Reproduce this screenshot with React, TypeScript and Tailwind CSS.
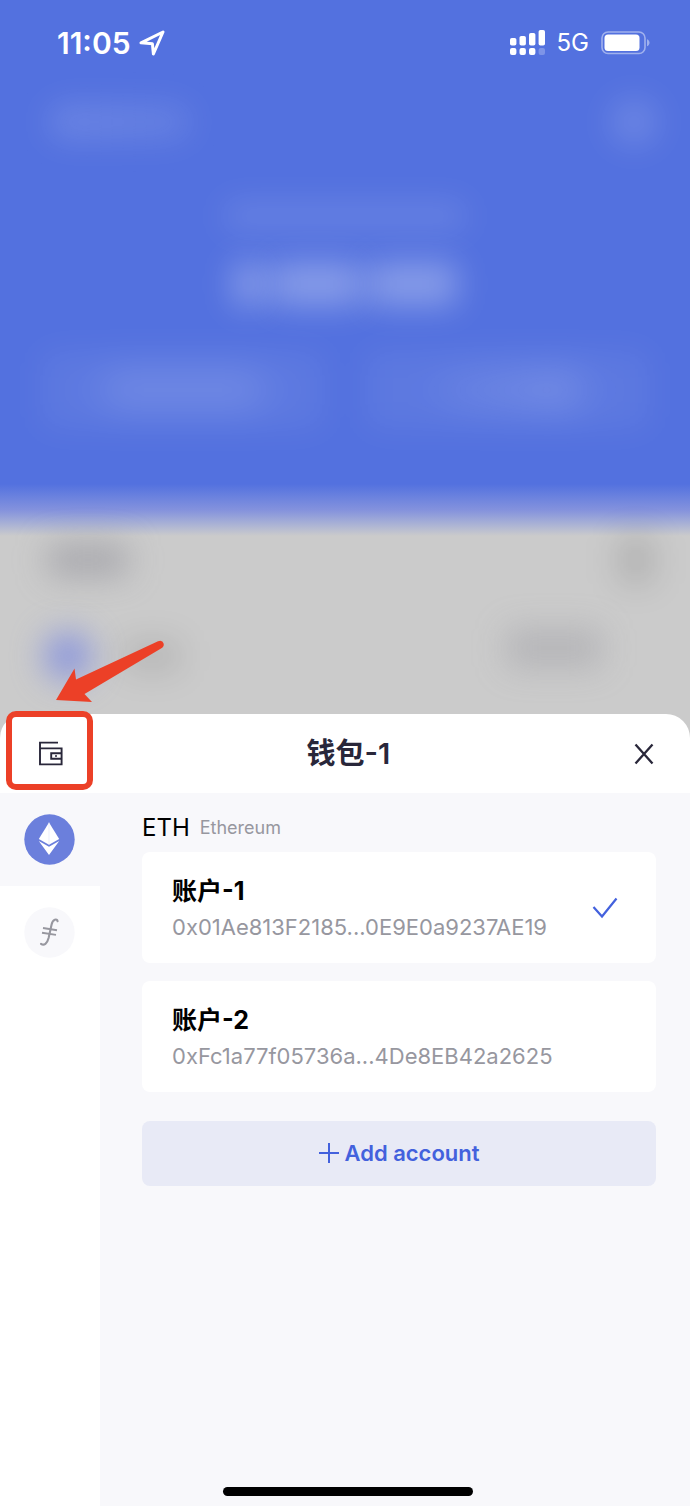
import React from "react";

const FONT = "font-['Inter','Noto_Sans_CJK_SC',sans-serif]";

function StatusBar() {
  return (
    <header className="flex h-[86px] items-center justify-between pl-[57px] pr-10 text-white">
      <div className="flex items-center gap-2">
        <time className="text-[30px] font-semibold leading-9">11:05</time>
        <svg width="26" height="26" viewBox="0 0 26 26" fill="none" aria-hidden="true">
          <path d="M2 12.8 L24 2 L14.4 24 L13.4 13.8 Z" stroke="white" strokeWidth="3" strokeLinejoin="round" />
        </svg>
      </div>
      <div className="flex items-center gap-3">
        <svg width="35" height="26" viewBox="0 0 35 26" fill="white" aria-hidden="true">
          <rect x="0" y="8" width="6.4" height="7.5" rx="1.8" />
          <rect x="9.5" y="6" width="6.4" height="9.5" rx="1.8" />
          <rect x="19" y="3" width="6.4" height="12.5" rx="1.8" />
          <rect x="28.6" y="0" width="6.4" height="15.5" rx="1.8" />
          <rect x="0" y="18" width="6.4" height="7" rx="2" />
          <rect x="9.5" y="18" width="6.4" height="7" rx="2" />
          <rect x="19" y="18" width="6.4" height="7" rx="2" />
          <rect x="28.6" y="18" width="6.4" height="7" rx="2" opacity="0.25" />
        </svg>
        <span className="text-2xl leading-8">5G</span>
        <svg width="49" height="24" viewBox="0 0 49 24" aria-hidden="true">
          <rect x="1" y="1" width="43" height="21.5" rx="6" fill="none" stroke="white" strokeOpacity="0.45" strokeWidth="1.6" />
          <rect x="3.5" y="3.5" width="35" height="16.5" rx="3.5" fill="white" />
          <path d="M46 8.2 C49.4 9.5 49.4 14 46 15.3 Z" fill="white" opacity="0.45" />
        </svg>
      </div>
    </header>
  );
}

function BlurredDashboard() {
  return (
    <div aria-hidden="true">
      <div className="flex items-center justify-between pl-12 pr-8 pt-3">
        <div className="h-9 w-36 rounded-full bg-linear-to-r from-white/15 to-white/10 blur-lg" />
        <div className="size-12 rounded-full bg-white/15 blur-lg" />
      </div>
      <div className="flex flex-col items-center gap-8 pt-14">
        <div className="h-7 w-60 rounded-md bg-white/12 blur-lg" />
        <div className="flex gap-2">
          <div className="h-11 w-8 rounded-md bg-white/30 blur-lg" />
          <div className="h-11 w-22 rounded-md bg-white/30 blur-lg" />
          <div className="h-11 w-22 rounded-md bg-white/30 blur-lg" />
        </div>
      </div>
      <div className="grid grid-cols-2 gap-10 px-10 pt-11">
        <div className="flex h-20 items-center justify-center rounded-xl bg-white/6 blur-lg">
          <div className="h-8 w-40 rounded-md bg-white/15 blur-md" />
        </div>
        <div className="flex h-20 items-center justify-center rounded-xl bg-white/6 blur-lg">
          <div className="h-8 w-36 rounded-md bg-linear-to-r from-white/5 to-white/20 blur-md" />
        </div>
      </div>
    </div>
  );
}

function BlurredAssets() {
  return (
    <div aria-hidden="true" className="h-[178px] bg-[#cbcbcb]">
      <div className="flex items-center justify-between pl-12 pr-9">
        <div className="h-8 w-20 rounded-md bg-[#85868f]/50 blur-lg" />
        <div className="h-12 w-9 rounded-md bg-black/12 blur-lg" />
      </div>
      <div className="flex items-center pl-11 pr-[88px] pt-11">
        <div className="size-12 rounded-full bg-[#7c8ae0]/80 blur-lg" />
        <div className="ml-8 h-8 w-14 rounded-md bg-black/10 blur-lg" />
        <div className="mb-4 ml-auto h-10 w-24 rounded-md bg-[#85868f]/30 blur-lg" />
      </div>
    </div>
  );
}

function WalletIcon() {
  return (
    <svg width="25" height="25" viewBox="0 0 25 25" fill="none" stroke="#29273a" strokeWidth="1.9" aria-hidden="true">
      <path d="M20 1.6 H2 V23.4 H23.6 V7.4 H2" />
      <path d="M23.6 12.3 H13.2 V17.7 H23.6" />
      <circle cx="18" cy="15" r="1" fill="#29273a" stroke="none" />
    </svg>
  );
}

function EthIcon() {
  return (
    <svg width="51" height="51" viewBox="0 0 51 51" aria-hidden="true">
      <circle cx="25.5" cy="25.5" r="25.2" fill="#6b7fdc" />
      <path d="M25 8.5 L35.2 25 L25 30.8 L14.8 25 Z" fill="white" />
      <path d="M14.8 27 L25 32.8 L35.2 27 L25 41 Z" fill="white" />
      <path d="M25 8.5 V30.5" stroke="#e3e7f9" strokeWidth="0.7" />
    </svg>
  );
}

function FilIcon() {
  return (
    <svg width="51" height="51" viewBox="0 0 51 51" fill="none" stroke="#97979f" aria-hidden="true">
      <circle cx="25.5" cy="25.5" r="25.2" fill="#f8f8fb" stroke="none" />
      <path d="M33.6 14.2 C33 11.4 28.8 12 27.6 17.5 L24.6 31 C23.2 36.6 20 39 17 36.8" strokeWidth="2.1" strokeLinecap="round" />
      <path d="M19 21 L33 23.2 M18 25.7 L32 27.9" strokeWidth="1.9" />
    </svg>
  );
}

const accounts = [
  { name: "账户-1", address: "0x01Ae813F2185...0E9E0a9237AE19", selected: true },
  { name: "账户-2", address: "0xFc1a77f05736a...4De8EB42a2625", selected: false },
];

function AccountCard({ name, address, selected }: (typeof accounts)[number]) {
  return (
    <button
      type="button"
      aria-pressed={selected}
      className="flex h-[111px] w-full items-center justify-between rounded-lg bg-white pl-[30px] pr-[38px] text-left"
    >
      <span className="flex flex-col gap-0.5">
        <span className="text-[25px] font-bold leading-9 text-black">{name}</span>
        <span className="text-[22px] leading-8 text-[#97979f]">{address}</span>
      </span>
      {selected && (
        <svg width="26" height="22" viewBox="0 0 26 22" fill="none" aria-hidden="true">
          <path d="M1.5 10 L10 19.5 L24.5 1.5" stroke="#4361dd" strokeWidth="2.2" />
        </svg>
      )}
    </button>
  );
}

function Sheet() {
  return (
    <section className="relative flex flex-1 flex-col rounded-t-3xl bg-white">
      <div className="flex h-[79px] items-center justify-between pl-[38px] pr-9">
        <button type="button" aria-label="Wallets" className="relative">
          <WalletIcon />
          <span className="pointer-events-none absolute -bottom-6 -left-8 -right-[30px] -top-[30px] rounded-[10px] border-[6px] border-[#ec4027]" />
          <svg
            className="pointer-events-none absolute -top-[102px] left-4"
            width="112"
            height="66"
            viewBox="0 0 112 66"
            fill="#ec4027"
            aria-hidden="true"
          >
            <path d="M2 61 L20.5 29.5 L22 40.5 L104 2.3 Q108.5 0.8 109.6 4.5 Q110.5 7.5 107 9.5 L30.500 55 L38 63 Z" />
          </svg>
        </button>
        <h1 className="text-[29px] font-semibold leading-10 text-[#29273a]">钱包-1</h1>
        <button type="button" aria-label="Close">
          <svg width="20" height="22" viewBox="0 0 20 22" fill="none" stroke="#29273a" strokeWidth="2.3" aria-hidden="true">
            <path d="M1.5 1.5 L18.5 20.5 M18.5 1.5 L1.5 20.5" />
          </svg>
        </button>
      </div>
      <div className="flex flex-1">
        <nav aria-label="Networks" className="w-[100px] shrink-0">
          <button type="button" aria-label="Ethereum" className="flex h-[93px] w-full items-center bg-[#f8f8fb] pl-6">
            <EthIcon />
          </button>
          <button type="button" aria-label="Filecoin" className="flex h-[93px] w-full items-center pl-6">
            <FilIcon />
          </button>
        </nav>
        <main className="flex-1 bg-[#f8f8fb] pl-[42px] pr-[34px] pt-4">
          <h2 className="flex h-[43px] items-start gap-2.5 pt-[3px]">
            <span className="text-2xl leading-8 text-black">ETH</span>
            <span className="text-lg leading-8 text-[#97979f]">Ethereum</span>
          </h2>
          <div className="flex flex-col gap-[18px]">
            {accounts.map((account) => (
              <AccountCard key={account.name} {...account} />
            ))}
          </div>
          <button
            type="button"
            className="mt-[29px] flex h-[65px] w-full items-center justify-center gap-1 rounded-lg bg-[#e8eaf6] pb-0.5 text-[22px] font-semibold leading-8 text-[#4361dd]"
          >
            <svg width="22" height="22" viewBox="0 0 22 22" stroke="#4361dd" strokeWidth="2" aria-hidden="true">
              <path d="M1 11 H21 M11 1 V21" />
            </svg>
            Add account
          </button>
        </main>
      </div>
      <div className="absolute bottom-2.5 left-0 flex w-full justify-center pl-1.5">
        <div className="h-[9px] w-[250px] rounded-full bg-black" />
      </div>
    </section>
  );
}

export default function App() {
  return (
    <div className={`flex min-h-screen flex-col bg-[#cbcbcb] ${FONT}`}>
      <div className="h-[484px] bg-[#5371df]">
        <StatusBar />
        <BlurredDashboard />
      </div>
      <div className="h-[52px] bg-linear-to-b from-[#5371df] via-[#8492dd] to-[#cbcbcb]" />
      <BlurredAssets />
      <Sheet />
    </div>
  );
}
